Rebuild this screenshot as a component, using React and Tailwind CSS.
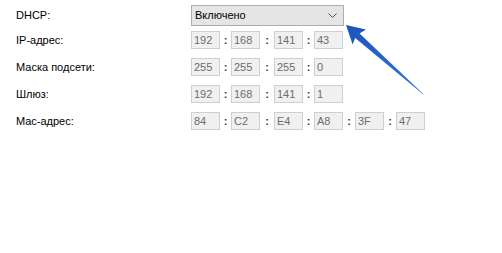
import React from "react";

// Network settings panel: DHCP select plus read-only address fields
const rows = [
  { label: "IP-адрес:", parts: ["192", "168", "141", "43"] },
  { label: "Маска подсети:", parts: ["255", "255", "255", "0"] },
  { label: "Шлюз:", parts: ["192", "168", "141", "1"] },
  { label: "Mac-адрес:", parts: ["84", "C2", "E4", "A8", "3F", "47"] },
];

// gaps between the boxes are not even in the original form
const colonWidths = ["", "w-[11px]", "w-[14px]", "w-[11px]", "w-[12px]", "w-[12px]"];

const Field = ({ value }) => (
  <div className="w-[29px] h-[18px] border border-[#cfcfcf] bg-[#f0f0f0] pl-[2px] text-[#6d6d6d] leading-[16px]">
    {value}
  </div>
);

const Colon = ({ index }) => (
  <span className={`${colonWidths[index]} text-center font-bold text-[#333] leading-[16px]`}>:</span>
);

const AddressRow = ({ label, parts }) => (
  <div className="flex items-center h-[18px] mt-[9px]">
    <div className="w-[175px] text-black">{label}</div>
    <div className="flex items-center">
      {parts.map((p, i) => (
        <React.Fragment key={i}>
          {i > 0 && <Colon index={i} />}
          <Field value={p} />
        </React.Fragment>
      ))}
    </div>
  </div>
);

export default function App() {
  return (
    <div className="relative w-[502px] h-[253px] bg-white overflow-hidden font-['Liberation_Sans',Arial,sans-serif] text-[11px]">
      <div className="flex flex-col pt-[5px] pl-4">
        <div className="flex items-center h-[21px]">
          <div className="w-[175px] text-black">DHCP:</div>
          <div className="flex items-center justify-between w-[153px] h-[21px] border border-[#adadad] bg-[#e5e5e5] pl-[3px] pr-[6px] text-black">
            <span>Включено</span>
            <svg width="9" height="5" viewBox="0 0 9 5">
              <path d="M0.5 0.5 L4.5 4.5 L8.5 0.5" fill="none" stroke="#555" strokeWidth="1" />
            </svg>
          </div>
        </div>
        <div className="mt-[-4px]">
          {rows.map((r) => (
            <AddressRow key={r.label} label={r.label} parts={r.parts} />
          ))}
        </div>
      </div>

      {/* annotation arrow pointing at the DHCP select */}
      <svg className="absolute inset-0 pointer-events-none" width="502" height="253">
        <defs>
          <linearGradient id="arrowFill" x1="346" y1="25" x2="423" y2="94" gradientUnits="userSpaceOnUse">
            <stop offset="0" stopColor="#1d55b8" />
            <stop offset="1" stopColor="#2f74dc" />
          </linearGradient>
        </defs>
        <polygon
          points="346,25 366,29.6 359.6,33.4 423.6,94.2 422.4,93.8 355.2,37.9 352.6,44.6"
          fill="url(#arrowFill)"
        />
      </svg>
    </div>
  );
}
